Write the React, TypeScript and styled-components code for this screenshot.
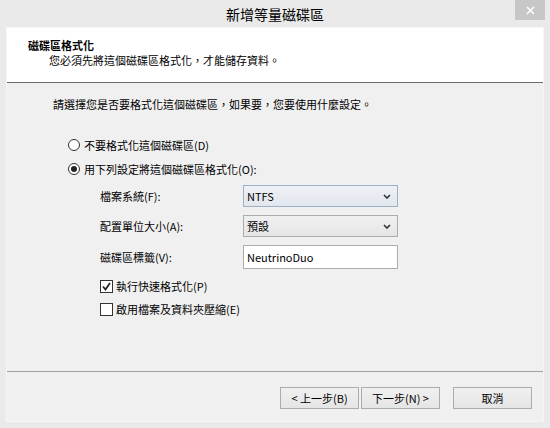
import styled, { createGlobalStyle } from 'styled-components';

const GlobalStyle = createGlobalStyle`
  html, body { margin: 0; padding: 0; background: #eaeaea; }
  body {
    font-family: "Noto Sans CJK TC", "Noto Sans", sans-serif;
    font-size: 11px;
    color: #000;
  }
  * { box-sizing: border-box; }
`;

export default function App() {
  return (
    <>
      <GlobalStyle />
      <Window>
        <TitleBar>
          <span />
          <Title>新增等量磁碟區</Title>
          <CloseButton>
            <svg width="9" height="9" viewBox="0 0 9 9">
              <path d="M1 1 L8 8 M8 1 L1 8" stroke="#fff" strokeWidth="1.6" />
            </svg>
          </CloseButton>
        </TitleBar>
        <Client>
          <Header>
            <HeaderTitle>磁碟區格式化</HeaderTitle>
            <HeaderSub>您必須先將這個磁碟區格式化，才能儲存資料。</HeaderSub>
          </Header>
          <Body>
            <Line>請選擇您是否要格式化這個磁碟區，如果要，您要使用什麼設定。</Line>
            <OptionGroup>
              <OptionRow>
                <RadioMark $checked={false} />
                不要格式化這個磁碟區(D)
              </OptionRow>
              <OptionRow>
                <RadioMark $checked />
                用下列設定將這個磁碟區格式化(O):
              </OptionRow>
              <FormGrid>
                <Label>檔案系統(F):</Label>
                <Select $focused>
                  NTFS
                  <Chevron />
                </Select>
                <Label>配置單位大小(A):</Label>
                <Select>
                  預設
                  <Chevron />
                </Select>
                <Label>磁碟區標籤(V):</Label>
                <TextBox>NeutrinoDuo</TextBox>
              </FormGrid>
              <CheckGroup>
                <OptionRow>
                  <CheckMark>
                    <svg width="9" height="9" viewBox="0 0 9 9">
                      <path d="M1 4.5 L3.5 7.5 L8 1" fill="none" stroke="#222" strokeWidth="1.7" />
                    </svg>
                  </CheckMark>
                  執行快速格式化(P)
                </OptionRow>
                <OptionRow>
                  <CheckMark />
                  啟用檔案及資料夾壓縮(E)
                </OptionRow>
              </CheckGroup>
            </OptionGroup>
          </Body>
          <ButtonBar>
            <Button>&lt; 上一步(B)</Button>
            <Button>下一步(N) &gt;</Button>
            <Button $gap>取消</Button>
          </ButtonBar>
        </Client>
      </Window>
    </>
  );
}

function Chevron() {
  return (
    <ChevronIcon width="8" height="5" viewBox="0 0 8 5">
      <path d="M1 1 L4 4 L7 1" fill="none" stroke="#333" strokeWidth="1.6" />
    </ChevronIcon>
  );
}

const Window = styled.div`
  width: 550px;
  height: 428px;
  display: flex;
  flex-direction: column;
  background: #eaeaea;
`;

const TitleBar = styled.div`
  height: 28px;
  display: grid;
  grid-template-columns: 1fr auto 1fr;
`;

const Title = styled.div`
  font-size: 14px;
  line-height: 28px;
  color: #000;
`;

const CloseButton = styled.div`
  justify-self: end;
  width: 30px;
  height: 20px;
  margin-right: 5px;
  background: #c7c7c7;
  display: flex;
  align-items: center;
  justify-content: center;
`;

const Client = styled.div`
  flex: 1;
  margin: 0 7px 7px;
  display: flex;
  flex-direction: column;
  box-shadow: 0 0 0 1px #f6f6f6;
`;

const Header = styled.div`
  height: 55px;
  background: #fff;
  border-bottom: 1px solid #6b6b6b;
  padding: 10px 0 0 21px;
  line-height: 15px;
`;

const HeaderTitle = styled.div`
  font-weight: bold;
`;

const HeaderSub = styled.div`
  padding-left: 21px;
`;

const Body = styled.div`
  flex: 1;
  background: #f0f0f0;
  padding: 14px 0 0 46px;
  display: flex;
  flex-direction: column;
`;

const Line = styled.div`
  line-height: 15px;
`;

const OptionGroup = styled.div`
  margin: 25px 0 0 15px;
  display: flex;
  flex-direction: column;
  gap: 8px;
`;

const OptionRow = styled.div`
  height: 16px;
  display: flex;
  align-items: center;
  gap: 3px;
`;

const RadioMark = styled.span<{ $checked?: boolean }>`
  width: 12px;
  height: 12px;
  border: 1px solid #333;
  border-radius: 50%;
  background: #fff;
  display: flex;
  align-items: center;
  justify-content: center;
  margin-right: 1px;
  &::after {
    content: '';
    width: 6px;
    height: 6px;
    border-radius: 50%;
    background: #222;
    display: ${(p) => (p.$checked ? 'block' : 'none')};
  }
`;

const CheckMark = styled.span`
  width: 13px;
  height: 13px;
  border: 1px solid #333;
  background: #fff;
  display: flex;
  align-items: center;
  justify-content: center;
`;

const FormGrid = styled.div`
  margin-left: 32px;
  display: grid;
  grid-template-columns: 143px 155px;
  grid-template-rows: 22px 22px 24px;
  row-gap: 8px;
  align-items: center;
`;

const Label = styled.div``;

const Select = styled.div<{ $focused?: boolean }>`
  height: 22px;
  display: flex;
  align-items: center;
  justify-content: space-between;
  padding: 0 6px 0 3px;
  border: 1px solid ${(p) => (p.$focused ? '#9cb0c8' : '#acacac')};
  background: ${(p) =>
    p.$focused
      ? 'linear-gradient(#eef1f5, #e2e7ee)'
      : 'linear-gradient(#f0f0f0, #e5e5e5)'};
`;

const ChevronIcon = styled.svg`
  display: block;
`;

const TextBox = styled.div`
  height: 24px;
  display: flex;
  align-items: center;
  padding-left: 3px;
  border: 1px solid #abadb3;
  background: #fff;
`;

const CheckGroup = styled.div`
  margin: 1px 0 0 32px;
  display: flex;
  flex-direction: column;
  gap: 7px;
`;

const ButtonBar = styled.div`
  height: 50px;
  background: #f0f0f0;
  border-top: 1px solid #a0a0a0;
  display: flex;
  justify-content: flex-end;
  align-items: flex-start;
  gap: 2px;
  padding: 15px 11px 0 0;
`;

const Button = styled.div<{ $gap?: boolean }>`
  width: 79px;
  height: 22px;
  margin-left: ${(p) => (p.$gap ? '11px' : '0')};
  border: 1px solid #acacac;
  background: linear-gradient(#f0f0f0, #e5e5e5);
  display: flex;
  align-items: center;
  justify-content: center;
`;
